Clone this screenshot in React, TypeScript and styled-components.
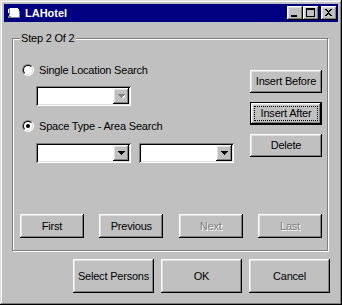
import React from "react";
import styled, { createGlobalStyle, css } from "styled-components";

const GlobalStyle = createGlobalStyle`
  html, body { margin: 0; padding: 0; background: #c0c0c0; }
  * { box-sizing: border-box; }
`;

const Window = styled.div`
  width: 342px;
  height: 305px;
  padding: 4px;
  background: #c0c0c0;
  box-shadow: inset -1px -1px 0 #000, inset 1px 1px 0 #dfdfdf,
    inset -2px -2px 0 #808080, inset 2px 2px 0 #fff;
  display: flex;
  flex-direction: column;
  font-family: "Liberation Sans", Arial, sans-serif;
  font-size: 11px;
  letter-spacing: -0.2px;
  color: #000;
`;

const TitleBar = styled.div`
  height: 18px;
  background: #000080;
  display: flex;
  align-items: center;
  padding: 0 1px 0 2px;
  color: #fff;
`;

const TitleIcon = styled.svg`
  width: 16px;
  height: 16px;
  margin-right: 3px;
  flex: none;
`;

const TitleText = styled.div`
  flex: 1;
  font-weight: bold;
  font-size: 11px;
  letter-spacing: 0;
`;

const bevel = css`
  background: #c0c0c0;
  box-shadow: inset -1px -1px 0 #000, inset 1px 1px 0 #fff,
    inset -2px -2px 0 #808080, inset 2px 2px 0 #dfdfdf;
`;

const TitleButton = styled.div<{ $gap?: boolean }>`
  ${bevel}
  width: 16px;
  height: 14px;
  margin-left: ${(p) => (p.$gap ? "2px" : "0")};
  display: flex;
  svg { display: block; }
`;

const Content = styled.div`
  flex: 1;
  padding: 16px 8px 8px 8px;
  display: flex;
  flex-direction: column;
`;

const GroupBox = styled.div`
  position: relative;
  width: 316px;
  height: 213px;
  border: 1px solid #808080;
  box-shadow: inset 1px 1px 0 #fff, 1px 1px 0 #fff;
  padding: 23px 5px 12px 7px;
  display: flex;
  flex-direction: column;
`;

const GroupLabel = styled.div`
  position: absolute;
  top: -8px;
  left: 7px;
  padding: 0 2px 0 1px;
  background: #c0c0c0;
  line-height: 14px;
`;

const TopArea = styled.div`
  display: flex;
  justify-content: space-between;
`;

const LeftCol = styled.div`
  margin-left: 2px;
  display: flex;
  flex-direction: column;
`;

const RadioRow = styled.div<{ $mt?: number }>`
  height: 16px;
  margin-top: ${(p) => p.$mt ?? 0}px;
  display: flex;
  align-items: center;
  gap: 5px;
`;

const RadioOuter = styled.span`
  width: 12px;
  height: 12px;
  border-radius: 50%;
  border: 1px solid;
  border-color: #808080 #fff #fff #808080;
  display: flex;
  flex: none;
`;

const RadioInner = styled.span`
  width: 10px;
  height: 10px;
  border-radius: 50%;
  border: 1px solid;
  border-color: #000 #dfdfdf #dfdfdf #000;
  background: #fff;
  display: flex;
  align-items: center;
  justify-content: center;
`;

const RadioDot = styled.span`
  width: 4px;
  height: 4px;
  border-radius: 50%;
  background: #000;
`;

const ComboRow = styled.div<{ $mt: number }>`
  margin-left: 14px;
  margin-top: ${(p) => p.$mt}px;
  display: flex;
  gap: 8px;
`;

const ComboField = styled.div`
  width: 95px;
  height: 20px;
  padding: 2px;
  background: #fff;
  box-shadow: inset 1px 1px 0 #808080, inset -1px -1px 0 #fff,
    inset 2px 2px 0 #000, inset -2px -2px 0 #dfdfdf;
  display: flex;
  justify-content: flex-end;
`;

const DropButton = styled.div`
  ${bevel}
  width: 16px;
  height: 16px;
  display: flex;
  align-items: center;
  justify-content: center;
`;

const RightCol = styled.div`
  margin-top: 8px;
  display: flex;
  flex-direction: column;
  gap: 9px;
`;

const Button = styled.div<{
  $w: number;
  $h: number;
  $default?: boolean;
  $disabled?: boolean;
}>`
  ${bevel}
  position: relative;
  width: ${(p) => p.$w}px;
  height: ${(p) => p.$h}px;
  display: flex;
  align-items: center;
  justify-content: center;
  padding-bottom: 1px;
  white-space: nowrap;
  ${(p) =>
    p.$default &&
    css`
      box-shadow: inset 0 0 0 1px #000, inset -2px -2px 0 #000,
        inset 2px 2px 0 #fff, inset -3px -3px 0 #808080,
        inset 3px 3px 0 #dfdfdf;
      &::after {
        content: "";
        position: absolute;
        inset: 4px;
        border: 1px dotted #000;
      }
    `}
  ${(p) =>
    p.$disabled &&
    css`
      color: #808080;
      text-shadow: 1px 1px 0 #fff;
    `}
`;

const NavRow = styled.div`
  margin-top: auto;
  display: flex;
  justify-content: space-between;
`;

const BottomRow = styled.div`
  margin-top: 8px;
  display: flex;
  justify-content: flex-end;
  gap: 7px;
`;

const Arrow = ({ disabled }: { disabled?: boolean }) => (
  <svg width="7" height="4" viewBox="0 0 7 4" shapeRendering="crispEdges">
    {disabled && (
      <path d="M1 1h7v1h-1v1h-1v1h-1v1h-1v-1h-1v-1h-1v-1h-1z" fill="#fff" />
    )}
    <path
      d="M0 0h7v1h-1v1h-1v1h-1v1h-1v-1h-1v-1h-1v-1h-1z"
      fill={disabled ? "#808080" : "#000"}
    />
  </svg>
);

const Combo = ({ disabled }: { disabled?: boolean }) => (
  <ComboField>
    <DropButton>
      <Arrow disabled={disabled} />
    </DropButton>
  </ComboField>
);

const Radio = ({ checked }: { checked?: boolean }) => (
  <RadioOuter>
    <RadioInner>{checked && <RadioDot />}</RadioInner>
  </RadioOuter>
);

export default function App() {
  return (
    <>
      <GlobalStyle />
      <Window>
        <TitleBar>
          <TitleIcon viewBox="0 0 16 16" shapeRendering="crispEdges">
            <path d="M3 3h8l2 2v1l1 1v6h-9l-1-1h-1v-3l-1-1v-4z" fill="#fff" />
            <path d="M3 3h1v7h-1zM2 11h3v2h-3z" fill="#808080" />
            <path d="M5 12h9v1h-9zM13 6h1v7h-1z" fill="#808080" />
            <path d="M3 13h2v1h-2z" fill="#000" />
          </TitleIcon>
          <TitleText>LAHotel</TitleText>
          <TitleButton>
            <svg width="16" height="14" shapeRendering="crispEdges">
              <rect x="4" y="9" width="6" height="2" fill="#000" />
            </svg>
          </TitleButton>
          <TitleButton>
            <svg width="16" height="14" shapeRendering="crispEdges">
              <path
                d="M3 2h9v9h-9zM4 4v6h7v-6z"
                fill="#000"
                fillRule="evenodd"
              />
            </svg>
          </TitleButton>
          <TitleButton $gap>
            <svg width="16" height="14" shapeRendering="crispEdges">
              <path
                d="M4 3h2v1h1v1h1v-1h1v-1h2v1h-1v1h-1v1h-1v1h1v1h1v1h1v1h-2v-1h-1v-1h-1v1h-1v1h-2v-1h1v-1h1v-1h1v-1h-1v-1h-1v-1h-1z"
                fill="#000"
              />
            </svg>
          </TitleButton>
        </TitleBar>
        <Content>
          <GroupBox>
            <GroupLabel>Step 2 Of 2</GroupLabel>
            <TopArea>
              <LeftCol>
                <RadioRow>
                  <Radio />
                  <span>Single Location Search</span>
                </RadioRow>
                <ComboRow $mt={8}>
                  <Combo disabled />
                </ComboRow>
                <RadioRow $mt={12}>
                  <Radio checked />
                  <span>Space Type - Area Search</span>
                </RadioRow>
                <ComboRow $mt={9}>
                  <Combo />
                  <Combo />
                </ComboRow>
              </LeftCol>
              <RightCol>
                <Button $w={72} $h={23}>Insert Before</Button>
                <Button $w={72} $h={23} $default>
                  Insert After
                </Button>
                <Button $w={72} $h={23}>Delete</Button>
              </RightCol>
            </TopArea>
            <NavRow>
              <Button $w={64} $h={24}>First</Button>
              <Button $w={64} $h={24}>Previous</Button>
              <Button $w={64} $h={24} $disabled>
                Next
              </Button>
              <Button $w={64} $h={24} $disabled>
                Last
              </Button>
            </NavRow>
          </GroupBox>
          <BottomRow>
            <Button $w={81} $h={34}>Select Persons</Button>
            <Button $w={81} $h={34}>OK</Button>
            <Button $w={81} $h={34}>Cancel</Button>
          </BottomRow>
        </Content>
      </Window>
    </>
  );
}
